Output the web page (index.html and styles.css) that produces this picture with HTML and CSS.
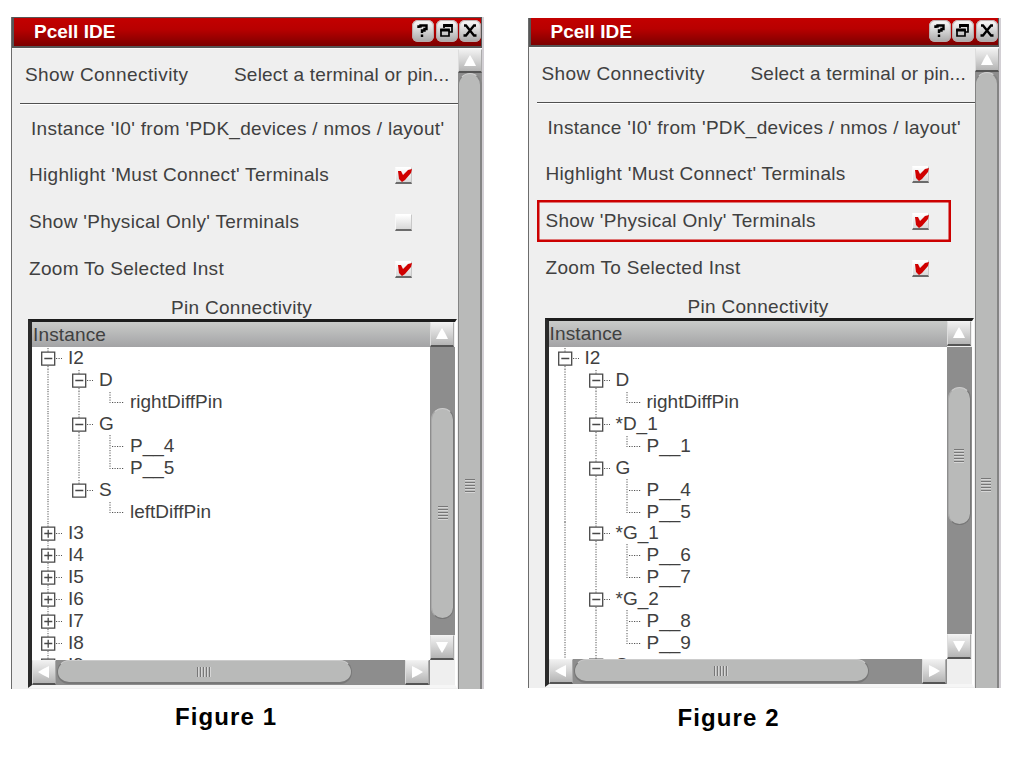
FILE: index.html
```html
<!DOCTYPE html>
<html lang="en">
<head>
<meta charset="utf-8">
<title>Pcell IDE</title>
<link rel="stylesheet" href="styles.css">
</head>
<body>
<svg class="defs" width="0" height="0">
  <symbol id="line" viewBox="0 0 31 22"><path class="dots" d="M16 0V22"/></symbol>
  <symbol id="minus" viewBox="0 0 31 22"><path class="dots" d="M16 1V5M16 19V22M24 11.5h6"/><path class="box" d="M9.7 5.2h13v13h-13zM12.3 11.5h8"/></symbol>
  <symbol id="minus-end" viewBox="0 0 31 22"><path class="dots" d="M16 1V5M24 11.5h6"/><path class="box" d="M9.7 5.2h13v13h-13zM12.3 11.5h8"/></symbol>
  <symbol id="plus" viewBox="0 0 31 22"><path class="dots" d="M16 1V5M16 19V22M24 11.5h6"/><path class="box" d="M9.7 5.2h13v13h-13zM12.3 11.5h8M16.2 7.7v8"/></symbol>
  <symbol id="tee" viewBox="0 0 31 22"><path class="dots" d="M16 0V22M18 11.5h12"/></symbol>
  <symbol id="ell" viewBox="0 0 31 22"><path class="dots" d="M16 1V12M18 11.5h12"/></symbol>
  <symbol id="up" viewBox="0 0 14 12"><path fill="#fff" d="M7 0l3 5 3 6H1l3-6z"/></symbol>
  <symbol id="tick" viewBox="0 0 17 17"><path fill="#d00000" d="M3 4l3 0 2 4 5-5 4-1-1 4-6 7-3 2-3-3z"/></symbol>
  <symbol id="help" viewBox="0 0 22 22"><path fill="none" stroke="#000" stroke-width="2.4" d="M6.500 8V6.500h2V5.500h6v3.500h-2v1.500h-2.500v2.500M10 14.500v2.500"/></symbol>
  <symbol id="restore" viewBox="0 0 22 22"><path fill="none" stroke="#000" stroke-width="1.700" d="M8 8V5h8v7h-3M5 10h8v6H5z"/><path stroke="#000" stroke-width="3" d="M7.200 5.500h9.600M4.200 10h9.600"/></symbol>
  <symbol id="close" viewBox="0 0 22 22"><path fill="none" stroke="#000" stroke-width="2.300" d="M5 5.500h2l8 10h2.500M17 5.500h-2l-8 10H4.500"/></symbol>
</svg>

<main class="page">
  <figure class="figure">
    <section class="window">
      <header class="titlebar">
        <h1 class="title">Pcell IDE</h1>
        <span class="tool"><svg><use href="#help"/></svg></span>
        <span class="tool"><svg><use href="#restore"/></svg></span>
        <span class="tool"><svg><use href="#close"/></svg></span>
      </header>
      <div class="content">
        <div class="form">
          <div class="heading"><span class="show">Show Connectivity</span><span class="select">Select a terminal or pin...</span></div>
          <p class="instance">Instance 'I0' from 'PDK_devices / nmos / layout'</p>
          <div class="options">
            <label class="option"><span class="opt-a">Highlight 'Must Connect' Terminals</span><i class="check"><svg><use href="#tick"/></svg></i></label>
            <label class="option"><span class="opt-b">Show 'Physical Only' Terminals</span><i class="check"></i></label>
            <label class="option"><span class="opt-c">Zoom To Selected Inst</span><i class="check"><svg><use href="#tick"/></svg></i></label>
          </div>
          <h2 class="list-title">Pin Connectivity</h2>
          <div class="list">
            <div class="column-head">Instance</div>
            <div class="arrow"><svg><use href="#up"/></svg></div>
            <div class="tree">
              <div class="row"><svg><use href="#minus"/></svg><span>I2</span></div>
              <div class="row"><svg><use href="#line"/></svg><svg><use href="#minus"/></svg><span>D</span></div>
              <div class="row"><svg><use href="#line"/></svg><svg><use href="#line"/></svg><svg><use href="#ell"/></svg><span>rightDiffPin</span></div>
              <div class="row"><svg><use href="#line"/></svg><svg><use href="#minus"/></svg><span>G</span></div>
              <div class="row"><svg><use href="#line"/></svg><svg><use href="#line"/></svg><svg><use href="#tee"/></svg><span>P__4</span></div>
              <div class="row"><svg><use href="#line"/></svg><svg><use href="#line"/></svg><svg><use href="#ell"/></svg><span>P__5</span></div>
              <div class="row"><svg><use href="#line"/></svg><svg><use href="#minus-end"/></svg><span>S</span></div>
              <div class="row short"><svg><use href="#line"/></svg><svg></svg><svg><use href="#ell"/></svg><span>leftDiffPin</span></div>
              <div class="row"><svg><use href="#plus"/></svg><span>I3</span></div>
              <div class="row"><svg><use href="#plus"/></svg><span>I4</span></div>
              <div class="row"><svg><use href="#plus"/></svg><span>I5</span></div>
              <div class="row"><svg><use href="#plus"/></svg><span>I6</span></div>
              <div class="row"><svg><use href="#plus"/></svg><span>I7</span></div>
              <div class="row"><svg><use href="#plus"/></svg><span>I8</span></div>
              <div class="row"><svg><use href="#plus"/></svg><span>I9</span></div>
            </div>
            <div class="vbar">
              <div class="vtrack"><div class="vthumb thumb-low"><i class="grip"></i></div></div>
              <div class="arrow down"><svg><use href="#up"/></svg></div>
            </div>
            <div class="hbar">
              <div class="arrow left"><svg><use href="#up"/></svg></div>
              <div class="htrack"><div class="hthumb"><i class="grip side"></i></div></div>
              <div class="arrow right"><svg><use href="#up"/></svg></div>
            </div>
          </div>
        </div>
        <div class="outer-bar">
          <div class="arrow"><svg><use href="#up"/></svg></div>
          <div class="outer-track"><div class="outer-thumb"><i class="grip"></i></div></div>
        </div>
      </div>
    </section>
    <figcaption class="caption">Figure 1</figcaption>
  </figure>

  <figure class="figure second">
    <section class="window">
      <header class="titlebar">
        <h1 class="title">Pcell IDE</h1>
        <span class="tool"><svg><use href="#help"/></svg></span>
        <span class="tool"><svg><use href="#restore"/></svg></span>
        <span class="tool"><svg><use href="#close"/></svg></span>
      </header>
      <div class="content">
        <div class="form">
          <div class="heading"><span class="show">Show Connectivity</span><span class="select">Select a terminal or pin...</span></div>
          <p class="instance">Instance 'I0' from 'PDK_devices / nmos / layout'</p>
          <div class="options">
            <label class="option"><span class="opt-a">Highlight 'Must Connect' Terminals</span><i class="check"><svg><use href="#tick"/></svg></i></label>
            <label class="option marked"><span class="opt-b">Show 'Physical Only' Terminals</span><i class="check"><svg><use href="#tick"/></svg></i></label>
            <label class="option"><span class="opt-c">Zoom To Selected Inst</span><i class="check"><svg><use href="#tick"/></svg></i></label>
          </div>
          <h2 class="list-title">Pin Connectivity</h2>
          <div class="list">
            <div class="column-head">Instance</div>
            <div class="arrow"><svg><use href="#up"/></svg></div>
            <div class="tree">
              <div class="row"><svg><use href="#minus"/></svg><span>I2</span></div>
              <div class="row"><svg><use href="#line"/></svg><svg><use href="#minus"/></svg><span>D</span></div>
              <div class="row"><svg><use href="#line"/></svg><svg><use href="#line"/></svg><svg><use href="#ell"/></svg><span>rightDiffPin</span></div>
              <div class="row"><svg><use href="#line"/></svg><svg><use href="#minus"/></svg><span>*D_1</span></div>
              <div class="row"><svg><use href="#line"/></svg><svg><use href="#line"/></svg><svg><use href="#ell"/></svg><span>P__1</span></div>
              <div class="row"><svg><use href="#line"/></svg><svg><use href="#minus"/></svg><span>G</span></div>
              <div class="row"><svg><use href="#line"/></svg><svg><use href="#line"/></svg><svg><use href="#tee"/></svg><span>P__4</span></div>
              <div class="row short"><svg><use href="#line"/></svg><svg><use href="#line"/></svg><svg><use href="#ell"/></svg><span>P__5</span></div>
              <div class="row"><svg><use href="#line"/></svg><svg><use href="#minus"/></svg><span>*G_1</span></div>
              <div class="row"><svg><use href="#line"/></svg><svg><use href="#line"/></svg><svg><use href="#tee"/></svg><span>P__6</span></div>
              <div class="row"><svg><use href="#line"/></svg><svg><use href="#line"/></svg><svg><use href="#ell"/></svg><span>P__7</span></div>
              <div class="row"><svg><use href="#line"/></svg><svg><use href="#minus"/></svg><span>*G_2</span></div>
              <div class="row"><svg><use href="#line"/></svg><svg><use href="#line"/></svg><svg><use href="#tee"/></svg><span>P__8</span></div>
              <div class="row"><svg><use href="#line"/></svg><svg><use href="#line"/></svg><svg><use href="#ell"/></svg><span>P__9</span></div>
              <div class="row"><svg><use href="#line"/></svg><svg><use href="#minus"/></svg><span>S</span></div>
            </div>
            <div class="vbar">
              <div class="vtrack"><div class="vthumb thumb-high"><i class="grip"></i></div></div>
              <div class="arrow down"><svg><use href="#up"/></svg></div>
            </div>
            <div class="hbar">
              <div class="arrow left"><svg><use href="#up"/></svg></div>
              <div class="htrack"><div class="hthumb"><i class="grip side"></i></div></div>
              <div class="arrow right"><svg><use href="#up"/></svg></div>
            </div>
          </div>
        </div>
        <div class="outer-bar">
          <div class="arrow"><svg><use href="#up"/></svg></div>
          <div class="outer-track"><div class="outer-thumb"><i class="grip"></i></div></div>
        </div>
      </div>
    </section>
    <figcaption class="caption">Figure 2</figcaption>
  </figure>
</main>
</body>
</html>
```
FILE: styles.css
```css
* { box-sizing: border-box; }
body { margin: 0; background: #fff; color: #404040; font: 19px/22px "Liberation Sans", Arial, sans-serif; overflow: hidden; }
svg { display: block; }
.defs { position: absolute; }
.page { display: flex; gap: 43px; height: 771px; padding: 17px 0 0 11px; }
.figure { width: 473px; margin: 0; }
.second { margin-top: 1px; margin-left: 0.5px; }
.window { height: 672px; border-left: 1px solid #6c6c6c; border-right: 2px solid #d2cfd4; background: #efefef; overflow: hidden; display: flex; flex-direction: column; }
.second .window { height: 670px; }

.titlebar { flex: none; height: 31px; display: flex; align-items: flex-start; gap: 1.500px; padding: 2px 0 0 20px; border: solid #565656; border-width: 1px 1px 2px 2px; background: linear-gradient(#c30000, #b80000 40%, #7c0000); }
.second .titlebar { height: 29px; border-top: 0; }
.title { flex: 1; margin: 0; padding-top: 1px; color: #fff; font-size: 19px; line-height: 22px; font-weight: bold; }
.tool { width: 22px; height: 22px; border-radius: 6px; background: linear-gradient(#fff, #cfcfcf 55%, #a8a8a8); box-shadow: inset 0 0 1px 1px #b9a9a9; }
.tool svg { width: 22px; height: 22px; }

.content { flex: 1; display: flex; min-height: 0; border-top: 1px solid #fafafa; }
.form { flex: none; width: 446px; }
.heading { height: 56px; margin-left: 8px; padding: 15px 0 0 5px; display: flex; border-bottom: 1px solid #fff; box-shadow: inset 0 -1px #505050; white-space: nowrap; }
.show { width: 209px; letter-spacing: .42px; }
.select { letter-spacing: .2px; }
.instance { height: 49px; margin: 0; padding: 13px 0 0 19px; white-space: nowrap; letter-spacing: .3px; }
.options { display: grid; gap: 5px; margin-left: 8px; width: 414px; }
.option { height: 42px; display: flex; align-items: center; justify-content: space-between; padding: 0 22px 0 9px; white-space: nowrap; }
.marked { box-shadow: inset 0 0 0 2.500px #cc0000; }
.opt-a, .opt-b, .opt-c { letter-spacing: .3px; }
.check { width: 17px; height: 17px; border: solid; border-width: 1px 1px 2px; border-color: #fff #c8c8c8 #6b6b6b #f8f8f8; background: linear-gradient(#fff, #d8d8d8); }
.check svg { width: 17px; height: 17px; margin: -1px; }
.list-title { height: 29px; margin: 0; padding: 7px 0 0 159px; font-size: 19px; font-weight: normal; letter-spacing: .3px; }

.list { margin-left: 16px; width: 429px; display: grid; grid-template: 25px 313px 25px / 398px 25px; border: solid #0c0c0c; border-width: 3px 2px 3px 4px; border-image: linear-gradient(#444, #000) 1; border-right-color: #fff; }
.list { border-image: none; border-top-color: #1c1c1c; border-left-color: #2a2a2a; border-right-color: #fff; border-bottom-color: #f6f6f6; }
.second .list { grid-template-rows: 26px 312px 25px; }
.column-head { padding: 2px 0 0 1px; letter-spacing: .15px; background: linear-gradient(#c9cbc9, #a3a3a5); }
.tree { background: #fff; overflow: hidden; }
.row { display: flex; height: 22px; white-space: pre; }
.short { height: 21px; }
.row svg { width: 31px; height: 22px; }
.row span { padding-left: 5px; }
.dots { fill: none; stroke: #555; stroke-width: 1; stroke-dasharray: 1.200 1.300; }
.box { fill: none; stroke: #484848; stroke-width: 1.300; }

.arrow { width: 24px; height: 25px; display: flex; align-items: center; justify-content: center; background: linear-gradient(#f0f0f0, #d4d4d4 50%, #b4b4b4); border: solid; border-width: 1px 1px 2px; border-color: #f3f3f3 #aaa #555 #ddd; }
.arrow svg { width: 14px; height: 12px; }
.down svg { transform: rotate(180deg); }
.left svg { transform: rotate(-90deg); }
.right svg { transform: rotate(90deg); }
.vbar { display: flex; flex-direction: column; background: #e8e8e8; }
.vtrack { flex: 1; background: #8d8d8d; }
.vthumb, .hthumb, .outer-thumb { background: #b9bab9; display: flex; align-items: center; justify-content: center; }
.vthumb { width: 23px; margin-left: 1px; border-radius: 12px; border: 1px solid #777; border-top-color: #ccc; border-left-color: #a8a8a8; }
.thumb-low { height: 211px; transform: translateY(61px); }
.thumb-high { height: 138px; transform: translateY(40px); }
.hbar { display: flex; background: #8d8d8d; }
.htrack { width: 349px; }
.hthumb { width: 295px; height: 24px; margin-left: 1px; border-radius: 12px; border: 1px solid #777; border-top-color: #ccc; border-bottom-width: 2px; }
.grip { width: 10px; height: 15px; background: repeating-linear-gradient(#777 0 1px, #d6d6d6 1px 2px, #b9bab9 2px 3px); }
.side { width: 15px; height: 10px; background: repeating-linear-gradient(90deg, #777 0 1px, #d6d6d6 1px 2px, #b9bab9 2px 3px); }

.outer-bar { flex: 1; display: flex; flex-direction: column; }
.outer-bar .arrow { flex: none; width: 24px; height: 24px; }
.outer-track { flex: 1; background: #8e8e8e; }
.outer-thumb { height: 900px; border: 1px solid #848484; border-width: 1px 2px 1px 1px; border-top-color: #d0d0d0; border-radius: 12px 12px 0 0; align-items: flex-start; padding-top: 405px; }

.caption { margin-top: 14px; padding-left: 164px; color: #000; font-size: 24px; line-height: 28px; font-weight: bold; letter-spacing: 1.100px; }
.second .caption { margin-top: 16px; padding-left: 150px; }
```
